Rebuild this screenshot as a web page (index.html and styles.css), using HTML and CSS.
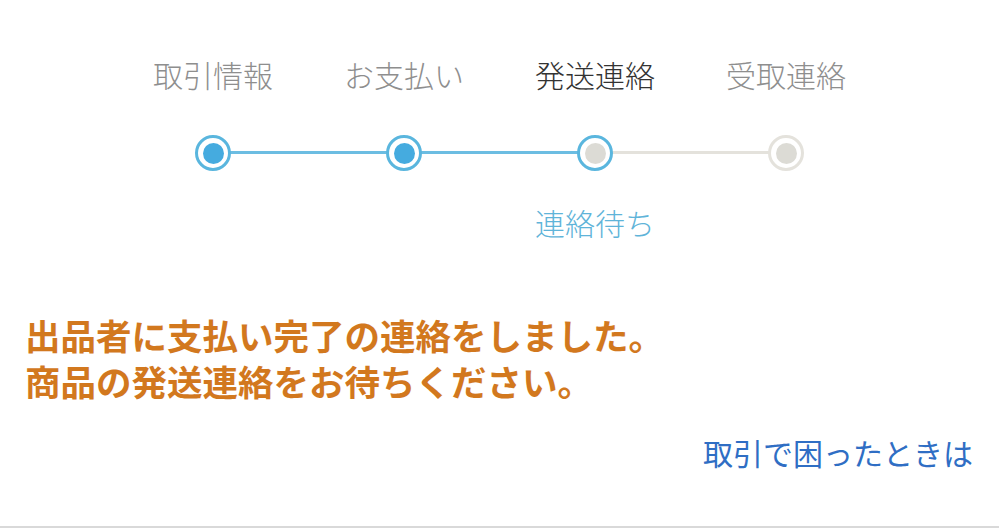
FILE: index.html
```html
<!DOCTYPE html>
<html lang="ja">
<head>
<meta charset="utf-8">
<link rel="stylesheet" href="styles.css">
</head>
<body>
<div class="page">
  <div class="steps">
    <div class="step done first">
      <div class="label">取引情報</div>
      <div class="track"><span class="dot"></span></div>
      <div class="note"></div>
    </div>
    <div class="step done">
      <div class="label">お支払い</div>
      <div class="track"><span class="dot"></span></div>
      <div class="note"></div>
    </div>
    <div class="step current">
      <div class="label">発送連絡</div>
      <div class="track"><span class="dot"></span></div>
      <div class="note">連絡待ち</div>
    </div>
    <div class="step todo last">
      <div class="label">受取連絡</div>
      <div class="track"><span class="dot"></span></div>
      <div class="note"></div>
    </div>
  </div>
  <div class="message">
    <p>出品者に支払い完了の連絡をしました。</p>
    <p>商品の発送連絡をお待ちください。</p>
  </div>
  <div class="help"><a class="help-link">取引で困ったときは</a></div>
  <div class="spacer"></div>
  <div class="bottom-rule"></div>
</div>
</body>
</html>
```
FILE: styles.css
```css
html, body {
  margin: 0;
  padding: 0;
  background: #ffffff;
}
.page {
  width: 999px;
  height: 528px;
  display: flex;
  flex-direction: column;
  font-family: "Noto Sans CJK JP", "Noto Sans", sans-serif;
  overflow: hidden;
}
.steps {
  width: 764px;
  margin: 0 auto;
  padding-top: 54px;
  display: grid;
  grid-template-columns: repeat(4, 191px);
}
.step {
  display: flex;
  flex-direction: column;
  align-items: center;
}
.label {
  font-size: 30px;
  font-weight: 300;
  line-height: 40px;
  height: 40px;
  color: #8e8e8e;
}
.current .label {
  color: #333333;
}
.track {
  position: relative;
  width: 100%;
  height: 36px;
  margin-top: 41px;
  display: flex;
  justify-content: center;
  align-items: center;
}
.track::before,
.track::after {
  content: "";
  position: absolute;
  top: 16px;
  height: 3px;
  width: 50%;
  background: #6cbde2;
}
.track::before { left: 0; }
.track::after { right: 0; }
.first .track::before { display: none; }
.last .track::after { display: none; }
.current .track::after,
.todo .track::before {
  background: #e4e2dc;
}
.dot {
  position: relative;
  z-index: 1;
  box-sizing: border-box;
  width: 36px;
  height: 36px;
  border-radius: 50%;
  border: 3px solid #5ab6de;
  background: #ffffff;
  display: flex;
  align-items: center;
  justify-content: center;
}
.dot::after {
  content: "";
  width: 21px;
  height: 21px;
  border-radius: 50%;
  background: #45abdf;
}
.current .dot::after {
  background: #dcdbd5;
}
.todo .dot {
  border-color: #e4e2dc;
}
.todo .dot::after {
  background: #dcdbd5;
}
.note {
  height: 40px;
  margin-top: 31px;
  font-size: 30px;
  font-weight: 300;
  line-height: 40px;
  color: #5fb4d9;
}
.message {
  margin-top: 70px;
  padding-left: 25px;
  color: #d2781e;
  font-size: 35.5px;
  font-weight: bold;
  line-height: 46px;
}
.message p {
  margin: 0;
}
.help {
  display: flex;
  justify-content: flex-end;
  padding-right: 26px;
  margin-top: 28px;
}
.help-link {
  font-size: 30px;
  font-weight: 400;
  line-height: 40px;
  color: #2f6ec4;
}
.spacer {
  flex: 1;
}
.bottom-rule {
  height: 2px;
  background: #d9d9d9;
}
```
